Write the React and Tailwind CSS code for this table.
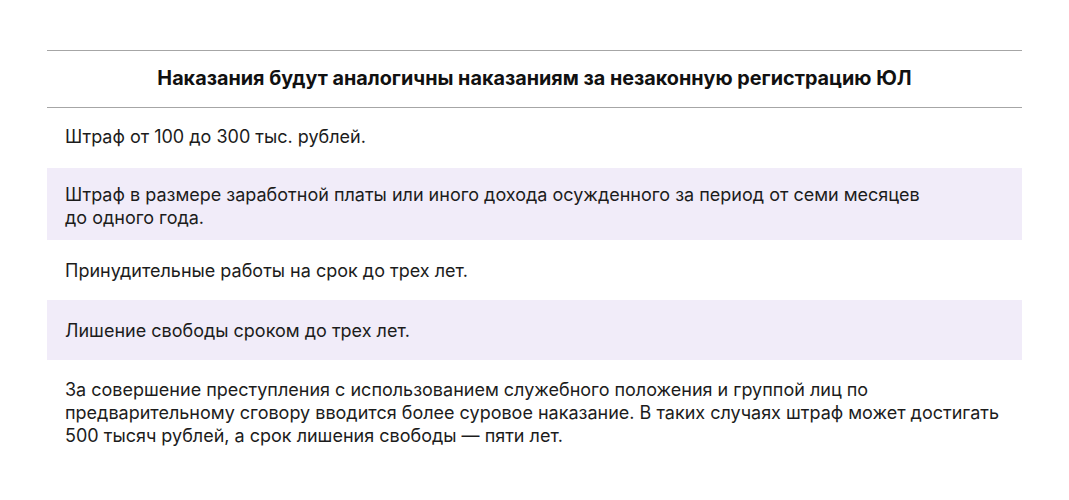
export default function App() {
  const font = { fontFamily: 'Inter, "Noto Sans", sans-serif' };
  return (
    <div className="w-[1069px] h-[500px] bg-white" style={font}>
      <div className="pt-[50px] px-[47px] text-[18px] leading-[23px] text-[#1c1c1c]">
        <div className="border-t border-b border-[#a6a6a6] h-[58px] flex items-center justify-center text-[19.8px] font-bold text-[#111] pb-[1px]">
          Наказания будут аналогичны наказаниям за незаконную регистрацию ЮЛ
        </div>
        <div className="min-h-[60px] flex items-center px-[18px] pb-[4px]">
          Штраф от 100 до 300 тыс. рублей.
        </div>
        <div className="min-h-[72px] flex items-center px-[18px] pt-[14px] pb-[11px] bg-[#f1ecf9]">
          <p>
            Штраф в размере заработной платы или иного дохода осужденного за период от семи месяцев до{"\u00A0"}одного года.
          </p>
        </div>
        <div className="min-h-[60px] flex items-center px-[18px]">
          Принудительные работы на срок до трех лет.
        </div>
        <div className="min-h-[60px] flex items-center px-[18px] pt-[1px] bg-[#f1ecf9]">
          Лишение свободы сроком до трех лет.
        </div>
        <div className="px-[18px] pt-[18px]">
          <p>
            За совершение преступления с использованием служебного положения и группой лиц по предварительному сговору вводится более суровое наказание. В таких случаях штраф может достигать 500 тысяч рублей, а срок лишения свободы — пяти лет.
          </p>
        </div>
      </div>
    </div>
  );
}
